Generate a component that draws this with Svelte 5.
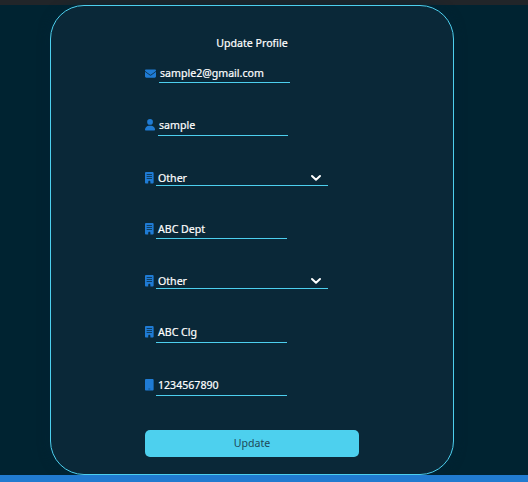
<script>
  const icons = {
    mail: { w: 512, d: 'M48 64C21.500 64 0 85.500 0 112c0 15.100 7.100 29.300 19.200 38.400L236.800 313.600c11.400 8.500 27 8.500 38.400 0L492.800 150.400c12.100-9.100 19.200-23.300 19.200-38.400c0-26.500-21.500-48-48-48H48zM0 176V384c0 35.300 28.700 64 64 64H448c35.300 0 64-28.700 64-64V176L294.400 339.200c-22.800 17.100-54 17.100-76.800 0L0 176z' },
    user: { w: 448, d: 'M224 256A128 128 0 1 0 224 0a128 128 0 1 0 0 256zm-45.700 48C79.800 304 0 383.800 0 482.300C0 498.700 13.300 512 29.700 512H418.300c16.400 0 29.700-13.300 29.700-29.700C448 383.800 368.200 304 269.700 304H178.300z' },
    building: { w: 384, d: 'M48 0C21 0 0 21 0 48V464c0 27 21 48 48 48h96V432c0-27 21-48 48-48s48 21 48 48v80h96c27 0 48-21 48-48V48c0-27-21-48-48-48zM74 100H310V134H74zM74 190H310V224H74zM74 280H310V312H74z' },
    phone: { w: 384, d: 'M48 0C21 0 0 21 0 48V464c0 27 21 48 48 48H336c27 0 48-21 48-48V48c0-27-21-48-48-48zM150 436H234V456H150z' }
  };

  const fields = [
    { icon: 'mail', value: 'sample2@gmail.com', kind: 'email' },
    { icon: 'user', value: 'sample', kind: 'name' },
    { icon: 'building', value: 'Other', kind: 'select' },
    { icon: 'building', value: 'ABC Dept', kind: 'text' },
    { icon: 'building', value: 'Other', kind: 'select' },
    { icon: 'building', value: 'ABC Clg', kind: 'text raised' },
    { icon: 'phone', value: '1234567890', kind: 'text raised' }
  ];
</script>

<div class="page">
  <div class="navbar"></div>
  <main>
    <form class="card">
      <h1>Update Profile</h1>
      <div class="fields">
        {#each fields as field}
          <div class="row {field.kind}">
            <span class="icon">
              <svg viewBox="0 0 {icons[field.icon].w} 512" aria-hidden="true">
                <path d={icons[field.icon].d} fill="currentColor" fill-rule="evenodd" />
              </svg>
            </span>
            <div class="control">
              <span class="value">{field.value}</span>
              {#if field.kind === 'select'}
                <svg class="chevron" viewBox="0 0 12 8" width="12" height="8" aria-hidden="true">
                  <path d="M2 2l4 3.700L10 2" fill="none" stroke="#fff" stroke-width="2" stroke-linecap="round" stroke-linejoin="round" />
                </svg>
              {/if}
            </div>
          </div>
        {/each}
      </div>
      <button type="button">Update</button>
    </form>
  </main>
  <footer></footer>
</div>

<style>
  .page {
    display: flex;
    flex-direction: column;
    height: 482px;
    overflow: hidden;
    background: #002331;
    font-family: "Noto Sans", "Open Sans", sans-serif;
    font-size: 11px;
    color: #fff;
  }
  .navbar {
    height: 5px;
    background: #212529;
  }
  main {
    height: 470px;
    padding-left: 50px;
  }
  .card {
    box-sizing: border-box;
    width: 404px;
    height: 470px;
    padding: 29px 94px 0;
    border: 1px solid #4dcfee;
    border-radius: 34px;
    background: #0a2838;
    box-shadow: 0 0 12px rgba(0, 36, 54, 0.8);
  }
  h1 {
    margin: 0 0 12px;
    font-size: 10.600px;
    font-weight: 400;
    line-height: 16px;
    text-align: center;
    white-space: nowrap;
    -webkit-text-stroke: 0.200px #fff;
  }
  .row {
    display: flex;
    height: 20px;
    margin-bottom: 33px;
  }
  .row.select {
    height: 17px;
  }
  .row.select:nth-child(5) {
    margin-bottom: 34px;
  }
  .row:last-child {
    margin-bottom: 34px;
  }
  .icon {
    width: 11px;
    padding-top: 4px;
    color: #1f7bd4;
    line-height: 0;
  }
  .icon svg {
    height: 11.500px;
  }
  .email .icon {
    width: 14px;
    padding-top: 4.500px;
  }
  .email .icon svg {
    height: 11px;
  }
  .name .icon,
  .select .icon,
  .raised .icon {
    padding-top: 3px;
  }
  .name .icon {
    width: 13px;
  }
  .control {
    box-sizing: border-box;
    display: flex;
    justify-content: space-between;
    width: 131px;
    padding-left: 2px;
    border-bottom: 1px solid #4dcfee;
  }
  .name .control {
    width: 130px;
    padding-left: 1px;
  }
  .email .control {
    padding-left: 1px;
  }
  .select .control {
    width: 172px;
    padding-right: 6px;
  }
  .value {
    font-size: 10.600px;
    line-height: 21px;
    white-space: nowrap;
    -webkit-text-stroke: 0.200px #fff;
  }
  .name .value,
  .raised .value,
  .select .value {
    line-height: 19px;
  }
  .chevron {
    margin-top: 5px;
  }
  button {
    display: block;
    width: 214px;
    height: 27px;
    padding: 0 0 1px;
    border: 0;
    border-radius: 5px;
    background: #4dd0ee;
    color: #1d4958;
    font: 10.600px/26px "Noto Sans", "Open Sans", sans-serif;
  }
  footer {
    height: 7px;
    background: #217bd0;
  }
</style>
